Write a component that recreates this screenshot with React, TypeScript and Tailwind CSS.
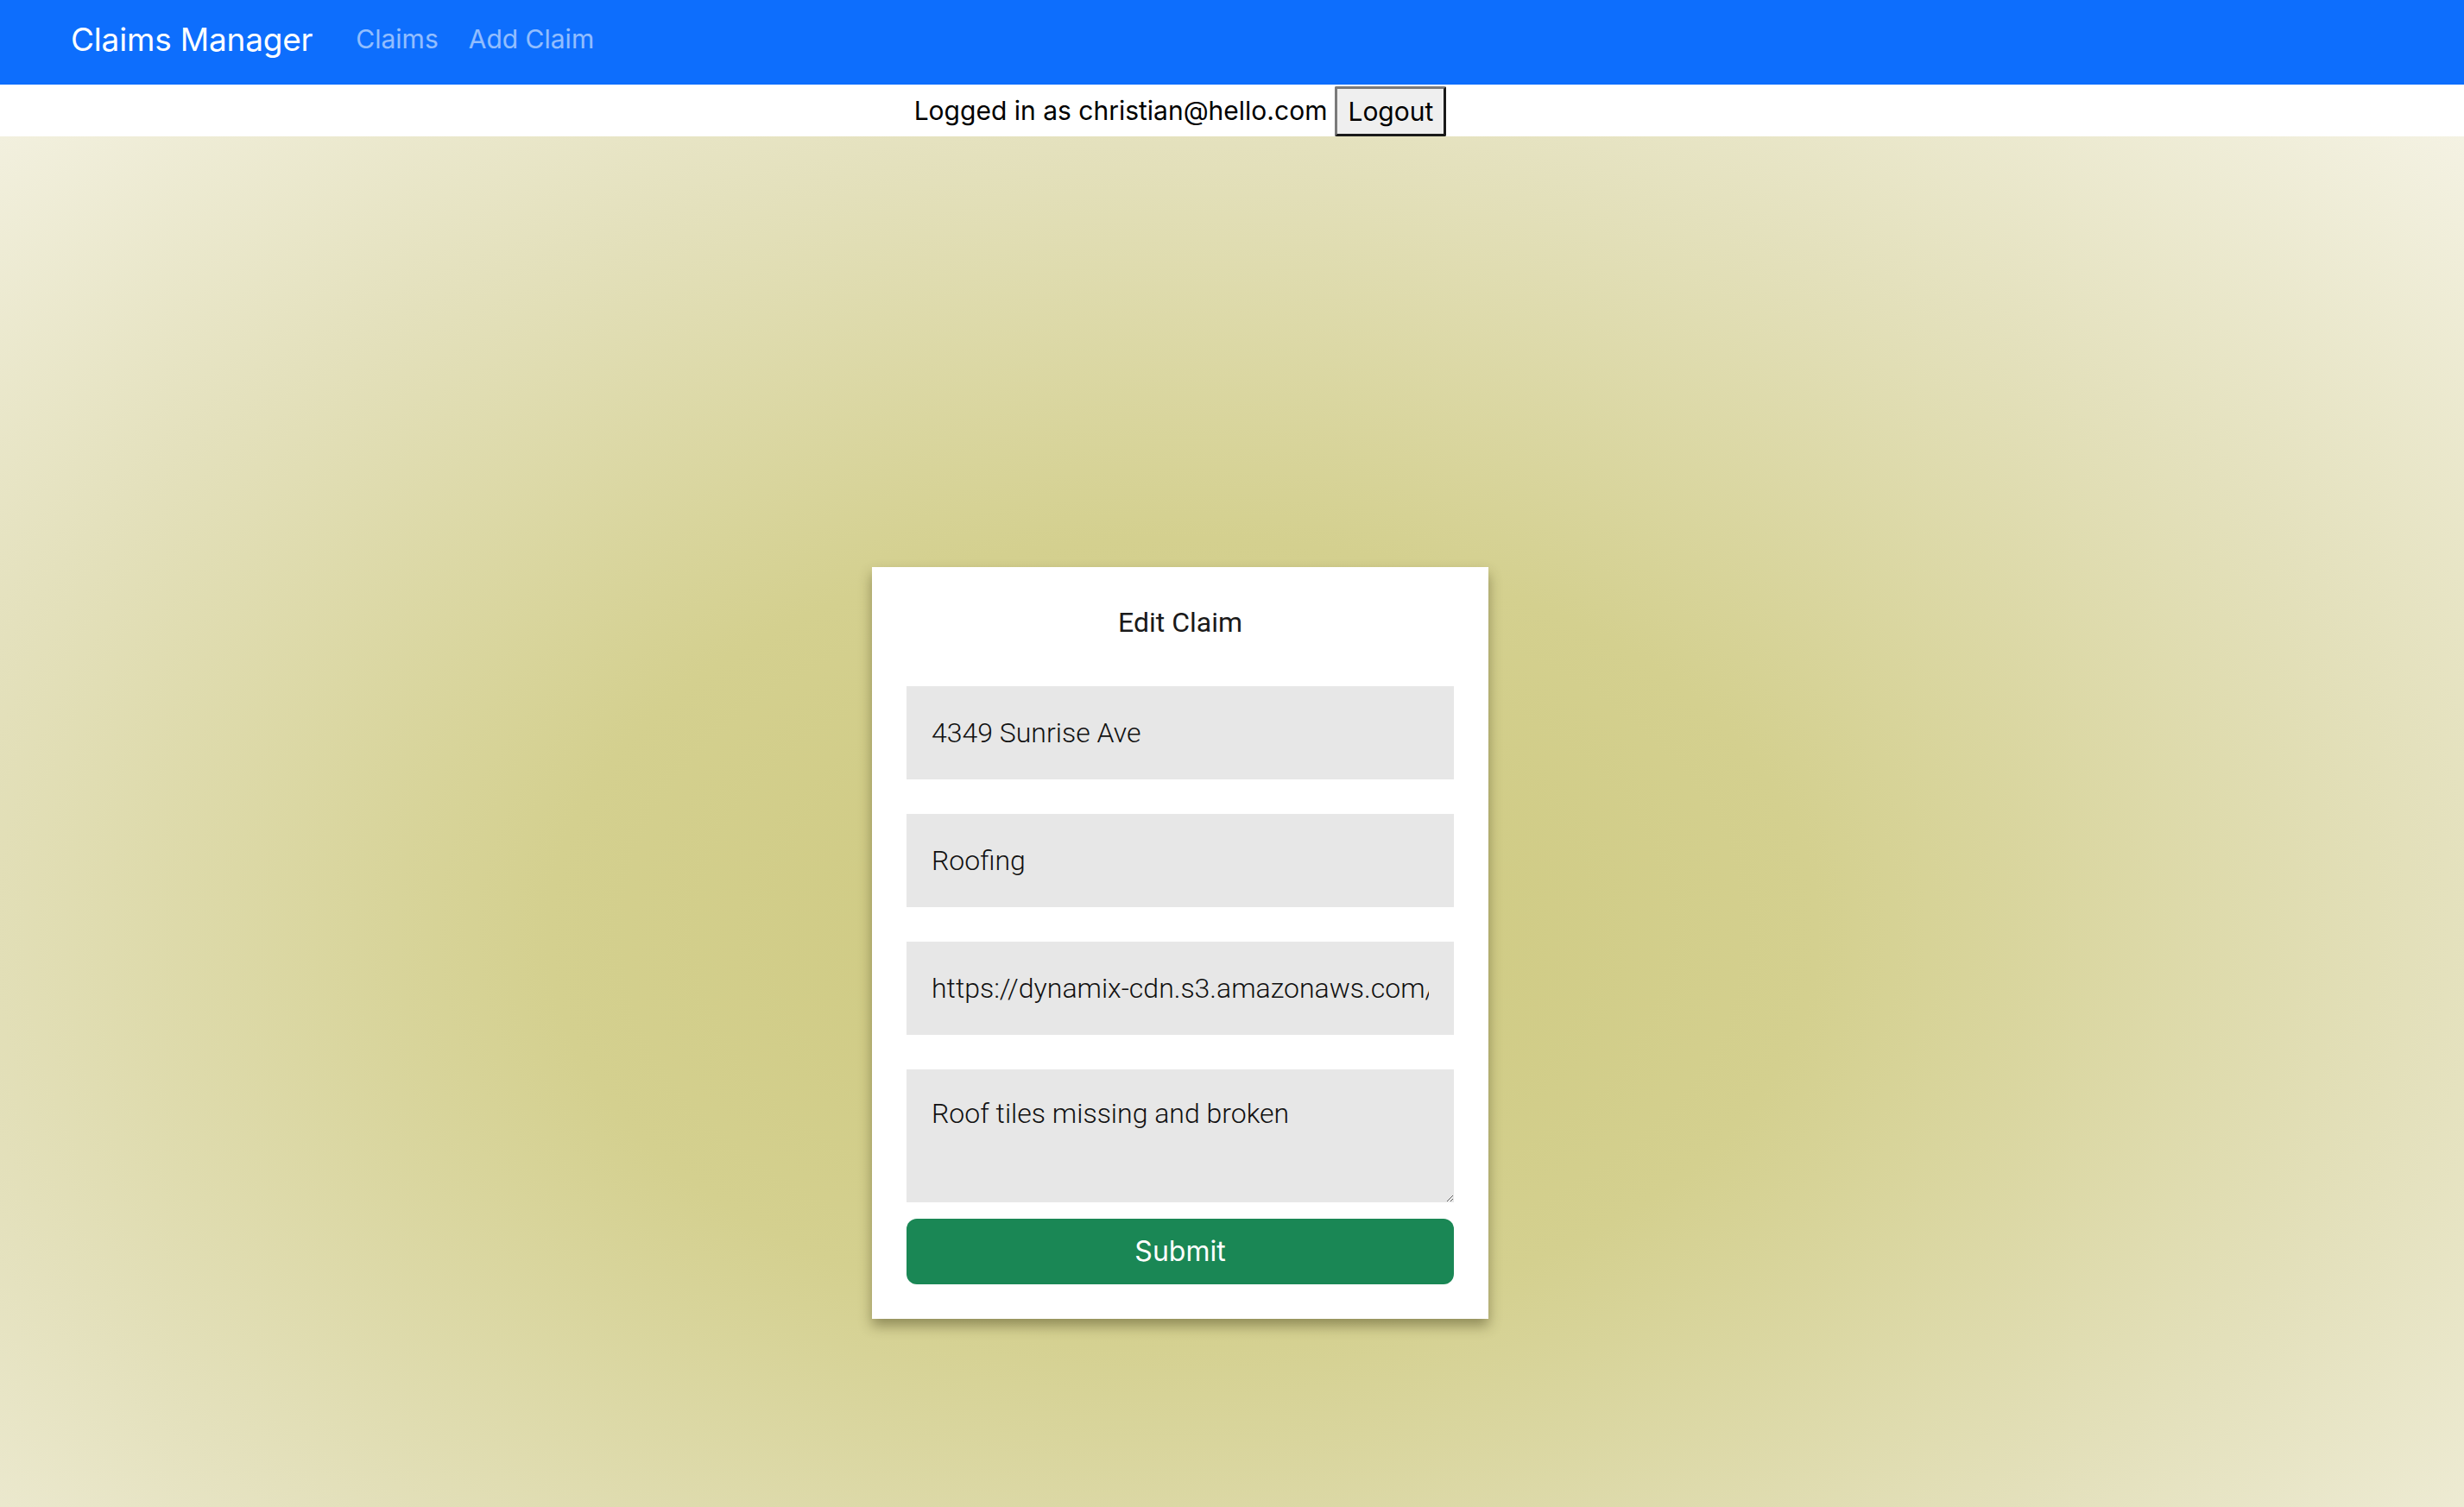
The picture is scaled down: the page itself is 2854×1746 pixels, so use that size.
import React, { useState } from "react";

const sans = "font-['Inter','Liberation_Sans',sans-serif]";
const roboto = "font-['Roboto','Liberation_Sans',sans-serif]";

export default function App() {
    const [address, setAddress] = useState("4349 Sunrise Ave");
    const [category, setCategory] = useState("Roofing");
    const [imageUrl, setImageUrl] = useState(
        "https://dynamix-cdn.s3.amazonaws.com/roofing-damage-photo.jpg"
    );
    const [notes, setNotes] = useState("Roof tiles missing and broken");

    const fieldClass =
        "w-full h-[108px] bg-[#e7e7e7] text-[#111] px-[29px] text-[32px] font-light outline-none " +
        roboto;

    return (
        <div className="min-h-screen flex flex-col">
            <nav className={`h-[98px] bg-[#0d6efd] flex items-center pl-[82px] pb-[8px] ${sans}`}>
                <span className="text-white text-[37px] leading-none tracking-[-0.2px] mr-[50px]">
                    Claims Manager
                </span>
                <a className="text-white/55 text-[30px] leading-none mr-[35px]">Claims</a>
                <a className="text-white/55 text-[30px] leading-none">Add Claim</a>
            </nav>

            <div className={`h-[60px] bg-white flex items-center justify-center pr-[120px] ${sans}`}>
                <span className="text-[30px] text-black mr-[9px]">Logged in as christian@hello.com</span>
                <button className="h-[58px] mt-[2px] px-[12px] text-[30px] text-black bg-[#efefef] border-[3px] border-t-[#7a7a7a] border-l-[#7a7a7a] border-b-[#1a1a1a] border-r-[#1a1a1a] rounded-[2px]">
                    Logout
                </button>
            </div>

            <main className="flex-1 flex justify-center items-start pt-[499px] pr-[120px] pb-[219px] bg-[radial-gradient(ellipse_at_48%_58%,#cdc87e_0%,#d4d08f_35%,#e4e1bd_70%,#f4f2e3_100%)]">
                <form
                    onSubmit={(e) => e.preventDefault()}
                    className="w-[714px] bg-white px-[40px] pt-[40px] pb-[40px] shadow-[0_8px_14px_rgba(60,55,20,0.45)] flex flex-col"
                >
                    <h1 className={`h-[48px] leading-[48px] text-center text-[32px] text-[#1a1a1a] mb-[50px] ${roboto}`}>
                        Edit Claim
                    </h1>
                    <input className={fieldClass} value={address} onChange={(e) => setAddress(e.target.value)} />
                    <input className={`${fieldClass} mt-[40px]`} value={category} onChange={(e) => setCategory(e.target.value)} />
                    <input className={`${fieldClass} mt-[40px]`} value={imageUrl} onChange={(e) => setImageUrl(e.target.value)} />
                    <textarea
                        className={`w-full h-[154px] mt-[40px] bg-[#e7e7e7] text-[#111] px-[29px] pt-[27px] text-[32px] leading-[48px] font-light outline-none resize-y ${roboto}`}
                        value={notes}
                        onChange={(e) => setNotes(e.target.value)}
                    />
                    <button
                        type="submit"
                        className={`mt-[19px] h-[76px] w-full rounded-[12px] bg-[#1a8755] text-white text-[32px] ${sans}`}
                    >
                        Submit
                    </button>
                </form>
            </main>
        </div>
    );
}
